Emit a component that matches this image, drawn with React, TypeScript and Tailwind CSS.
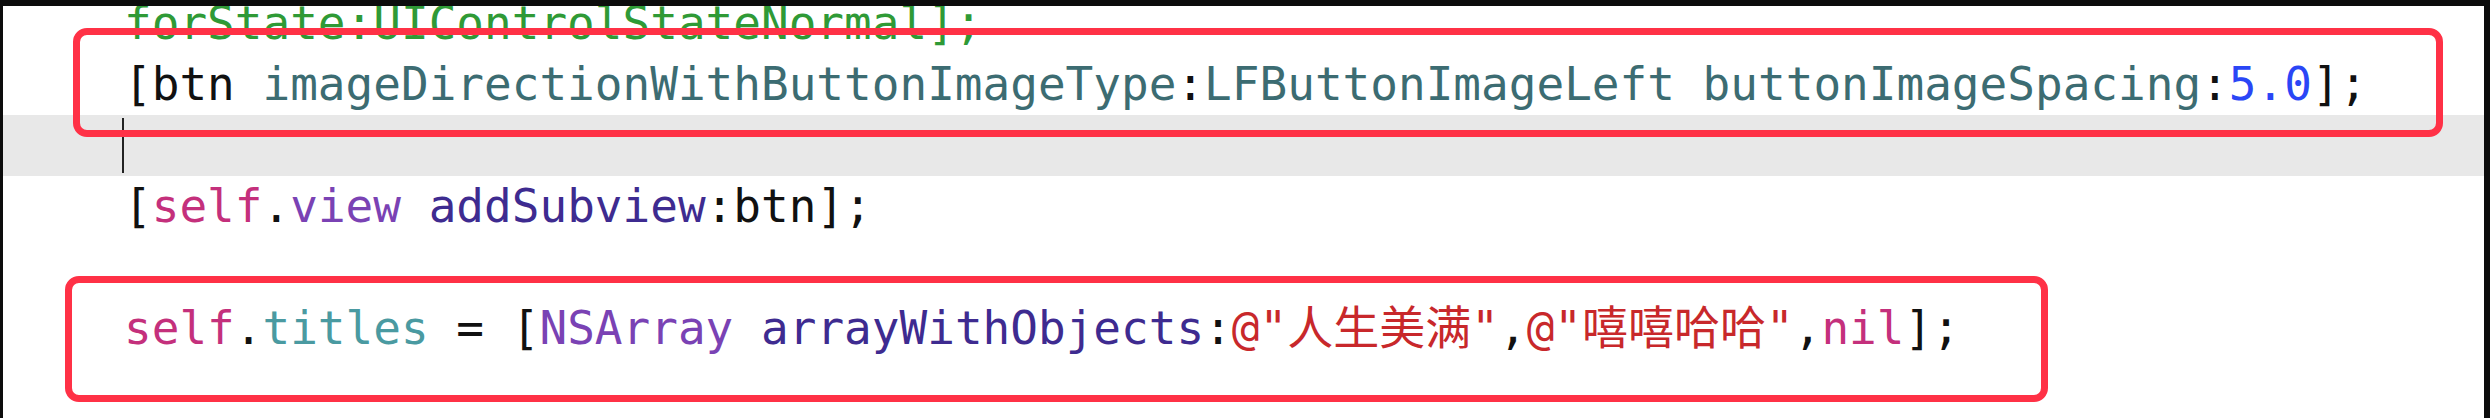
type Tok = { t: string; c: string };

const BLACK = "text-[#111111]";
const GREEN = "text-[#2f9a36]";
const TEAL = "text-[#3c6c72]";
const LTEAL = "text-[#4a9aa1]";
const BLUE = "text-[#2a46f6]";
const RED = "text-[#c8282b]";
const PINK = "text-[#c4307c]";
const VIOLET = "text-[#7a42b4]";
const DPURPLE = "text-[#3e2b90]";

// each entry is one editor line; null = blank line
const lines: (Tok[] | null)[] = [
  [{ t: "forState:UIControlStateNormal];", c: GREEN }],
  [
    { t: "[btn ", c: BLACK },
    { t: "imageDirectionWithButtonImageType", c: TEAL },
    { t: ":", c: BLACK },
    { t: "LFButtonImageLeft buttonImageSpacing", c: TEAL },
    { t: ":", c: BLACK },
    { t: "5.0", c: BLUE },
    { t: "];", c: BLACK },
  ],
  null,
  [
    { t: "[", c: BLACK },
    { t: "self", c: PINK },
    { t: ".", c: BLACK },
    { t: "view", c: VIOLET },
    { t: " ", c: BLACK },
    { t: "addSubview", c: DPURPLE },
    { t: ":btn];", c: BLACK },
  ],
  [],
  [
    { t: "self", c: PINK },
    { t: ".", c: BLACK },
    { t: "titles", c: LTEAL },
    { t: " = [", c: BLACK },
    { t: "NSArray", c: VIOLET },
    { t: " ", c: BLACK },
    { t: "arrayWithObjects", c: DPURPLE },
    { t: ":", c: BLACK },
    { t: "@\"人生美满\"", c: RED },
    { t: ",", c: BLACK },
    { t: "@\"嘻嘻哈哈\"", c: RED },
    { t: ",", c: BLACK },
    { t: "nil", c: PINK },
    { t: "];", c: BLACK },
  ],
  [],
];

export default function App() {
  return (
    <div className="flex h-[418px] w-[2490px] bg-[#0c0c0c] pl-[3px] pr-[6px] pt-[6px]">
      <div className="relative flex-1 overflow-hidden bg-white">
        <div
          className="-mt-[13px] flex flex-col text-[46px] whitespace-pre"
          style={{ fontFamily: '"DejaVu Sans Mono", "Noto Sans CJK SC", monospace' }}
        >
          {lines.map((line, i) =>
            line === null ? (
              // current line with caret
              <div key={i} className="relative h-[61px] bg-[#e8e8e8]">
                <div className="absolute left-[119px] top-[3px] h-[55px] w-[2px] bg-[#222222]" />
              </div>
            ) : (
              <div key={i} className="h-[61px] pl-[121px] leading-[61px]">
                {line.map((tok, j) => (
                  <span key={j} className={tok.c}>
                    {tok.t}
                  </span>
                ))}
              </div>
            )
          )}
        </div>

        {/* annotation boxes */}
        <div className="absolute left-[70px] top-[22px] h-[109px] w-[2370px] rounded-[14px] border-[7px] border-[#ff3146]" />
        <div className="absolute left-[62px] top-[270px] h-[126px] w-[1983px] rounded-[14px] border-[7px] border-[#ff3146]" />
      </div>
    </div>
  );
}
